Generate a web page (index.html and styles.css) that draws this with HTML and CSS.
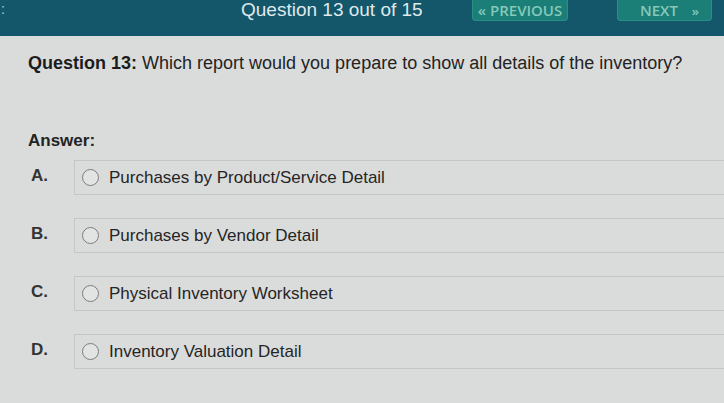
FILE: index.html
```html
<!DOCTYPE html>
<html lang="en">
<head>
  <meta charset="UTF-8">
  <meta name="viewport" content="width=device-width, initial-scale=1.0">
  <title>Question 13 out of 15</title>
  <link rel="stylesheet" href="styles.css">
</head>
<body>
  <div class="topbar">
    <span class="dots">:</span>
    <span class="counter">Question 13 out of 15</span>
    <button class="nav-btn prev">&laquo; PREVIOUS</button>
    <button class="nav-btn next">NEXT <span class="arrow">&raquo;</span></button>
  </div>

  <div class="quiz">
    <p class="question"><b>Question 13:</b> Which report would you prepare to show all details of the inventory?</p>

    <p class="answer-title">Answer:</p>

    <div class="options">
      <div class="option">
        <span class="letter">A.</span>
        <label class="choice"><span class="radio"></span>Purchases by Product/Service Detail</label>
      </div>
      <div class="option">
        <span class="letter">B.</span>
        <label class="choice"><span class="radio"></span>Purchases by Vendor Detail</label>
      </div>
      <div class="option">
        <span class="letter">C.</span>
        <label class="choice"><span class="radio"></span>Physical Inventory Worksheet</label>
      </div>
      <div class="option">
        <span class="letter">D.</span>
        <label class="choice"><span class="radio"></span>Inventory Valuation Detail</label>
      </div>
    </div>
  </div>
</body>
</html>
```

FILE: styles.css
```css
body {
  font-family: 'Liberation Sans', Arial, sans-serif;
  background: #dadcdb;
  color: #232323;
  margin: 0;
  overflow: hidden;
}

.topbar {
  height: 36px;
  background: #14566a;
  display: flex;
  align-items: flex-start;
  color: #dfe9eb;
}

.dots {
  font-size: 14px;
  line-height: 18px;
  width: 240px;
  padding-left: 1px;
  opacity: 0.8;
}

.counter {
  font-size: 19px;
  line-height: 19px;
  width: 231px;
}

.nav-btn {
  font-family: 'Open Sans', sans-serif;
  font-size: 15px;
  font-weight: 600;
  height: 21px;
  line-height: 18px;
  padding: 0;
  border: 1px solid #2a8f84;
  border-top: none;
  border-radius: 0 0 4px 4px;
  background: #1b7e77;
  color: #86c9ba;
}

.prev {
  width: 96px;
  margin-right: 49px;
}

.next {
  width: 95px;
  text-align: left;
  padding-left: 22px;
}

.next .arrow {
  margin-left: 10px;
  font-size: 13px;
}

.quiz {
  padding: 0 0 0 28px;
}

.question {
  font-size: 18px;
  margin: 16px 0 0;
  line-height: 22px;
}

.question b {
  color: #1c1c1c;
}

.answer-title {
  font-size: 17px;
  font-weight: bold;
  margin: 57px 0 0;
  line-height: 20px;
}

.options {
  display: flex;
  flex-direction: column;
  gap: 23px;
  margin-top: 9px;
  margin-right: -20px;
}

.option {
  display: flex;
  align-items: center;
}

.letter {
  width: 43px;
  padding-left: 3px;
  font-size: 17px;
  font-weight: bold;
  color: #333;
  margin-top: -4px;
}

.choice {
  flex: 1;
  height: 33px;
  border: 1px solid #c5c7c6;
  display: flex;
  align-items: center;
  font-size: 17px;
  color: #252525;
}

.radio {
  width: 15px;
  height: 15px;
  border: 1.5px solid #7b7d7c;
  border-radius: 50%;
  margin: 0 10px 0 7px;
  background: #e2e4e3;
}
```
